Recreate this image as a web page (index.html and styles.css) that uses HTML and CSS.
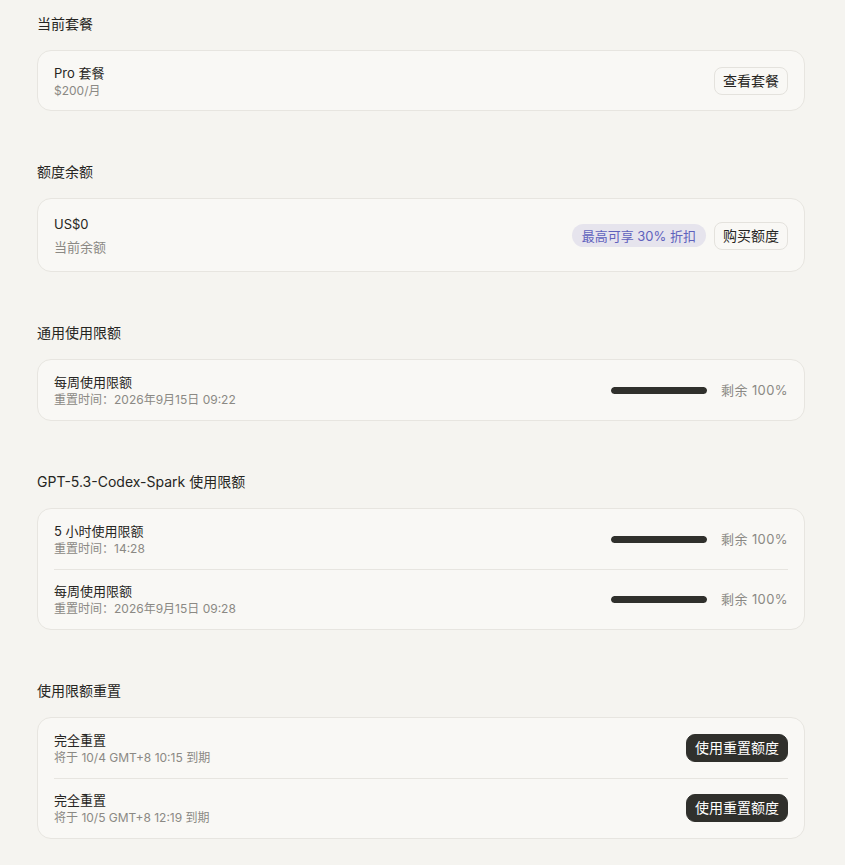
FILE: index.html
```html
<!DOCTYPE html>
<html lang="zh-CN">
<head>
<meta charset="utf-8">
<title>使用限额</title>
<link rel="stylesheet" href="styles.css">
</head>
<body>
<main class="page">
  <section class="section">
    <h2 class="section-title">当前套餐</h2>
    <div class="card">
      <div class="row row-tight">
        <div class="info">
          <div class="title">Pro 套餐</div>
          <div class="sub">$200/月</div>
        </div>
        <button class="btn btn-outline">查看套餐</button>
      </div>
    </div>
  </section>

  <section class="section">
    <h2 class="section-title">额度余额</h2>
    <div class="card">
      <div class="row row-balance">
        <div class="info">
          <div class="title">US$0</div>
          <div class="sub sub-lg">当前余额</div>
        </div>
        <div class="actions">
          <span class="badge">最高可享 30% 折扣</span>
          <button class="btn btn-outline">购买额度</button>
        </div>
      </div>
    </div>
  </section>

  <section class="section">
    <h2 class="section-title">通用使用限额</h2>
    <div class="card">
      <div class="row">
        <div class="info">
          <div class="title">每周使用限额</div>
          <div class="sub">重置时间：2026年9月15日 09:22</div>
        </div>
        <div class="usage">
          <div class="bar"><div class="bar-fill" style="width:100%"></div></div>
          <span class="usage-text">剩余 100%</span>
        </div>
      </div>
    </div>
  </section>

  <section class="section">
    <h2 class="section-title">GPT-5.3-Codex-Spark 使用限额</h2>
    <div class="card">
      <div class="row">
        <div class="info">
          <div class="title">5 小时使用限额</div>
          <div class="sub">重置时间：14:28</div>
        </div>
        <div class="usage">
          <div class="bar"><div class="bar-fill" style="width:100%"></div></div>
          <span class="usage-text">剩余 100%</span>
        </div>
      </div>
      <div class="row">
        <div class="info">
          <div class="title">每周使用限额</div>
          <div class="sub">重置时间：2026年9月15日 09:28</div>
        </div>
        <div class="usage">
          <div class="bar"><div class="bar-fill" style="width:100%"></div></div>
          <span class="usage-text">剩余 100%</span>
        </div>
      </div>
    </div>
  </section>

  <section class="section">
    <h2 class="section-title">使用限额重置</h2>
    <div class="card">
      <div class="row">
        <div class="info">
          <div class="title">完全重置</div>
          <div class="sub">将于 10/4 GMT+8 10:15 到期</div>
        </div>
        <button class="btn btn-dark">使用重置额度</button>
      </div>
      <div class="row">
        <div class="info">
          <div class="title">完全重置</div>
          <div class="sub">将于 10/5 GMT+8 12:19 到期</div>
        </div>
        <button class="btn btn-dark">使用重置额度</button>
      </div>
    </div>
  </section>
</main>
</body>
</html>
```

FILE: styles.css
```css
* {
  box-sizing: border-box;
}

html, body {
  margin: 0;
  padding: 0;
  background: #f5f4f0;
}

body {
  font-family: "Inter", "Noto Sans CJK SC", sans-serif;
  color: #2b2a27;
  -webkit-font-smoothing: antialiased;
}

.page {
  width: 768px;
  margin-left: 37px;
  padding-top: 14px;
}

.section {
  margin-bottom: 51px;
}

.section-title {
  margin: 0 0 16px;
  height: 20px;
  font-size: 14px;
  line-height: 20px;
  font-weight: 400;
  color: #262522;
}

.card {
  background: #f9f8f5;
  border: 1px solid #e7e5e0;
  border-radius: 14px;
  padding: 0 16px;
}

.row {
  display: flex;
  align-items: center;
  justify-content: space-between;
  padding: 12px 0;
}

.row + .row {
  border-top: 1px solid #e7e5e0;
  padding-top: 11px;
}

.row-tight {
  padding-bottom: 11px;
}

.row-balance {
  padding: 15px 0 14px;
}

.info {
  display: flex;
  flex-direction: column;
}

.title {
  height: 20px;
  font-size: 13px;
  line-height: 20px;
  font-weight: 400;
  color: #262522;
}

.sub {
  height: 16px;
  font-size: 12px;
  line-height: 16px;
  color: #8b8984;
}

.sub-lg {
  height: 20px;
  font-size: 13px;
  line-height: 20px;
  margin-top: 3px;
}

.actions {
  display: flex;
  align-items: center;
  gap: 8px;
}

.badge {
  display: inline-flex;
  align-items: center;
  height: 23px;
  padding: 0 10px;
  border-radius: 12px;
  background: #e6e4ed;
  color: #5f62bd;
  font-size: 13px;
  font-weight: 400;
  white-space: nowrap;
}

.btn {
  font-family: inherit;
  height: 28px;
  font-size: 14px;
  font-weight: 400;
  line-height: 26px;
  border-radius: 8px;
  cursor: pointer;
  white-space: nowrap;
}

.btn-outline {
  padding: 0 8px;
  background: #f9f8f5;
  border: 1px solid #e4e2dd;
  color: #262522;
}

.btn-dark {
  padding: 0 8px;
  background: #30302c;
  border: 1px solid #30302c;
  color: #ffffff;
  border-radius: 9px;
}

.usage {
  display: flex;
  align-items: center;
  gap: 14px;
}

.bar {
  width: 96px;
  height: 7px;
  border-radius: 4px;
  background: #e4e2dd;
  overflow: hidden;
}

.bar-fill {
  height: 100%;
  background: #30302c;
  border-radius: 4px;
}

.usage-text {
  font-size: 13px;
  line-height: 18px;
  letter-spacing: 0.4px;
  color: #8b8984;
  white-space: nowrap;
}
```
